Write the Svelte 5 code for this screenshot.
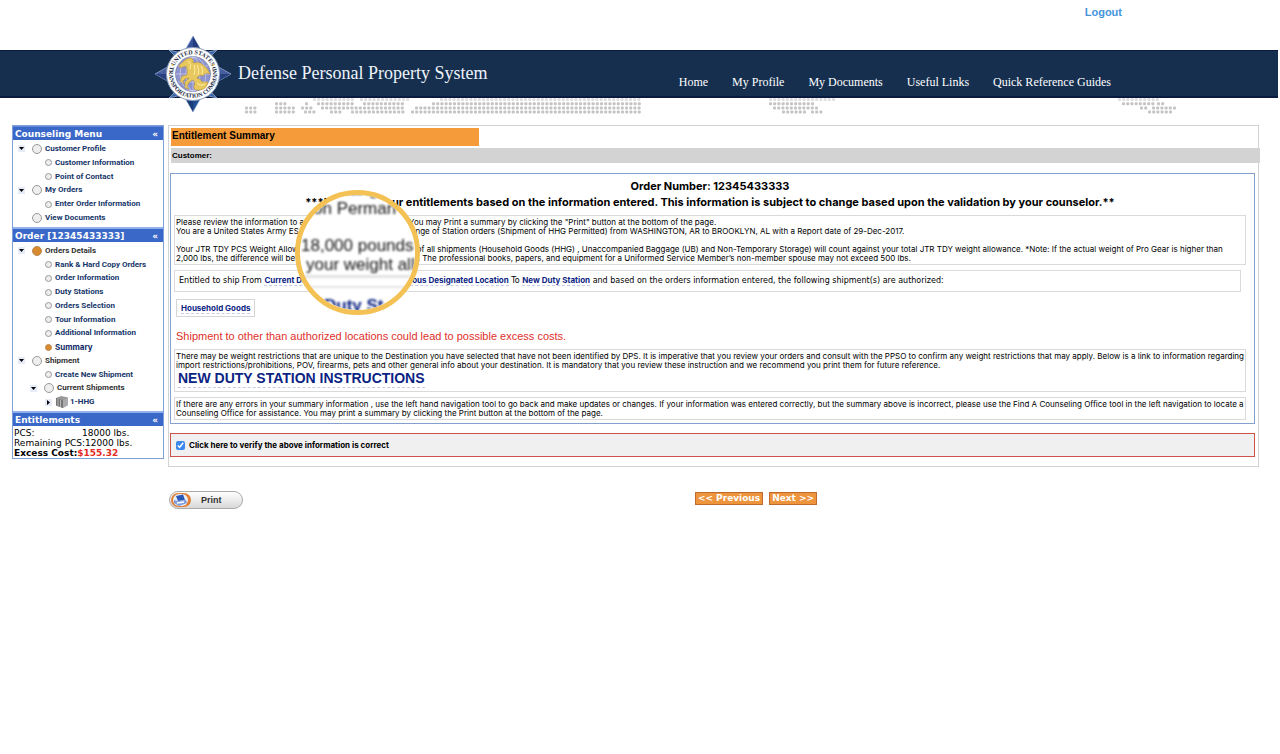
<script>
  const counseling = [
    { label: 'Customer Profile', level: 1, arrow: 'down', icon: 'big' },
    { label: 'Customer Information', level: 2, icon: 'small' },
    { label: 'Point of Contact', level: 2, icon: 'small' },
    { label: 'My Orders', level: 1, arrow: 'down', icon: 'big' },
    { label: 'Enter Order Information', level: 2, icon: 'small' },
    { label: 'View Documents', level: 1, icon: 'big' }
  ];
  const order = [
    { label: 'Orders Details', level: 1, arrow: 'down', icon: 'big', active: true, dark: true },
    { label: 'Rank & Hard Copy Orders', level: 2, icon: 'small' },
    { label: 'Order Information', level: 2, icon: 'small' },
    { label: 'Duty Stations', level: 2, icon: 'small' },
    { label: 'Orders Selection', level: 2, icon: 'small' },
    { label: 'Tour Information', level: 2, icon: 'small' },
    { label: 'Additional Information', level: 2, icon: 'small' },
    { label: 'Summary', level: 2, icon: 'small', active: true, current: true },
    { label: 'Shipment', level: 1, arrow: 'down', icon: 'big', dark: true },
    { label: 'Create New Shipment', level: 2, icon: 'small' },
    { label: 'Current Shipments', level: 2, arrow: 'down', icon: 'big', dark: true },
    { label: '1-HHG', level: 3, arrow: 'right', icon: 'box' }
  ];
  const menus = [
    { title: 'Counseling Menu', items: counseling, size: 'short' },
    { title: 'Order [12345433333]', items: order, size: 'long' }
  ];
  const nav = ['Home', 'My Profile', 'My Documents', 'Useful Links', 'Quick Reference Guides'];

  // Dotted world map below the banner: [row, first x, last x]
  const runs = [
    [0, 314, 353], [0, 361, 408], [0, 441, 640], [0, 770, 835], [0, 1119, 1155],
    [1, 276, 286], [1, 306, 306], [1, 318, 353], [1, 364, 401], [1, 433, 640], [1, 770, 814], [1, 1123, 1151], [1, 1158, 1163],
    [2, 246, 256], [2, 276, 294], [2, 302, 310], [2, 322, 401], [2, 416, 640], [2, 774, 814], [2, 1141, 1146], [2, 1153, 1176],
    [3, 246, 256], [3, 276, 294], [3, 305, 315], [3, 331, 340], [3, 352, 401], [3, 412, 640], [3, 783, 805], [3, 812, 822], [3, 1149, 1172]
  ];
  const dots = runs.flatMap(([row, a, b]) => {
    const n = Math.round((b - a) / 4.2);
    return Array.from({ length: n + 1 }, (_, i) => ({ x: a + i * 4.2, y: 1 + row * 4.2, row }));
  });
  let verified = $state(true);
</script>

<div class="page">
  <div class="top"><a href="#logout">Logout</a></div>
  <header>
    <svg class="seal" viewBox="-38 -38 76 76" aria-hidden="true">
      <g stroke="#9eb4dc" stroke-width=".7">
        <path d="M0 0L-24-24L-7-20ZM0 0L24-24L7-20ZM0 0L-24 24L-7 20ZM0 0L24 24L7 20Z" fill="#3c67a8" />
        <path d="M0-38L9-22L0 0L-9-22Z" fill="#34519b" />
        <path d="M0 38L9 22L0 0L-9 22Z" fill="#1f4d92" />
        <path d="M-38 0L-22-9L0 0L-22 9ZM38 0L22-9L0 0L22 9Z" fill="#455c9e" />
      </g>
      <path d="M0-38L9-22L0 0ZM0 38L-9 22L0 0ZM38 0L22 9L0 0ZM-38 0L-22 9L0 0Z" fill="#172f6c" opacity=".65" />
      <circle r="26.5" fill="#fff" stroke="#91a0bd" />
      <circle r="17.5" fill="#8d93cf" stroke="#69729f" stroke-width=".6" />
      <g fill="none" stroke="#d8dcf4" stroke-width=".6">
        <ellipse rx="7" ry="17" /><ellipse rx="13" ry="17" />
        <path d="M0-17V17M-17 0H17M-15-8H15M-15 8H15" />
      </g>
      <path d="M-10-12Q-7-16-2-16Q1-15 0-11Q6-13 9-10Q15-6 17 0Q12-2 10 2Q6 0 4 4Q8 5 9 8H15Q14 15 7 16Q0 17 1 12Q3 8 0 6Q-4 7-6 12L-4 15L-8 14L-8 8L-4 4Q-8 4-10 7L-9 10L-13 7L-11 2L-6 1Q-5-4-7-8L-13-6L-14-9Z" fill="#e7c75e" stroke="#b08c2e" stroke-width=".5" />
      <path d="M-5-13Q-1-10-3-5M1-9Q3-5 1 1M4-9Q7-5 5 1M8-8Q11-4 9 0M4 9Q8 13 12 10" fill="none" stroke="#fff0a5" stroke-width="1" />
      <path id="arc-top" d="M-19.5-5A20.2 20.2 0 0 1 19.5-5" fill="none" />
      <path id="ring-low" d="M-22.7-8A24 24 0 1 0 22.7-8" fill="none" />
      <text class="seal-text"><textPath href="#arc-top" startOffset="50%" text-anchor="middle">UNITED STATES</textPath></text>
      <text class="seal-text"><textPath href="#ring-low" startOffset="50%" text-anchor="middle">TRANSPORTATION COMMAND</textPath></text>
      <g fill="#e0c65c"><circle cx="-20.5" cy="-9" r="1" /><circle cx="20.5" cy="-9" r="1" /></g>
    </svg>
    <span class="brand">Defense Personal Property System</span>
    <nav>
      {#each nav as n}<a href="#top">{n}</a>{/each}
    </nav>
  </header>
  <svg class="map" viewBox="0 0 1280 16" aria-hidden="true">
    {#each dots as d}<rect x={d.x - 1} y={d.y - 1} width="3" height="3" rx="1" fill={d.row ? '#c4c4c4' : '#dedede'} />{/each}
  </svg>

  <div class="columns">
    <aside>
      {#each menus as m}
        <section>
          <h2>{m.title}<button aria-label="Collapse {m.title}">«</button></h2>
          <ul class={m.size}>
            {#each m.items as it}
              <li class="l{it.level}">
                <span class="slot">
                  {#if it.arrow}
                    <svg viewBox="0 0 7 7" width="7" height="7"><rect width="7" height="7" fill="#e6ecf7" /><path d={it.arrow === 'down' ? 'M1 2H6L3.5 5Z' : 'M2 1V6L5 3.5Z'} fill="#000" /></svg>
                  {/if}
                </span>
                {#if it.icon === 'box'}
                  <svg viewBox="0 0 12 12" width="12" height="12"><path d="M0 2L5 0L12 1.5V9L7 12L0 9.5Z" fill="#999" /><path d="M0 2L7 4V12L0 9.5Z" fill="#777" /><path d="M7 4L12 1.5V9L7 12Z" fill="#aaa" /><path d="M2 2.500V10M4.500 3.500V11" stroke="#b5b5b5" /></svg>
                {:else}
                  <i class={it.icon} class:active={it.active}></i>
                {/if}
                <a href="#top" class:dark={it.dark} class:current={it.current}>{it.label}</a>
              </li>
            {/each}
          </ul>
        </section>
      {/each}
      <section>
        <h2>Entitlements<button aria-label="Collapse Entitlements">«</button></h2>
        <dl>
          <div><dt>PCS:</dt><dd>18000 lbs.</dd></div>
          <div><dt>Remaining PCS:</dt><dd>12000 lbs.</dd></div>
          <div class="cost"><dt>Excess Cost:</dt><dd>$155.32</dd></div>
        </dl>
      </section>
    </aside>

    <main>
      <div class="frame">
        <h1>Entitlement Summary</h1>
        <div class="customer">Customer:</div>
        <div class="summary">
          <p class="lead">Order Number: 12345433333</p>
          <p class="lead">***Below are your entitlements based on the information entered. This information is subject to change based upon the validation by your counselor.**</p>
          <div class="note">
            Please review the information to assure that it is fully correct. You may Print a summary by clicking the "Print" button at the bottom of the page.<br />
            You are a United States Army ES, grade E-5, on Permanent Change of Station orders (Shipment of HHG Permitted) from WASHINGTON, AR to BROOKLYN, AL with a Report date of 29-Dec-2017.<br /><br />
            Your JTR TDY PCS Weight Allowance is 18,000 pounds. Weight of all shipments (Household Goods (HHG) , Unaccompanied Baggage (UB) and Non-Temporary Storage) will count against your total JTR TDY weight allowance. *Note: If the actual weight of Pro Gear is higher than<br />2,000 lbs, the difference will be added to your weight allowance. The professional books, papers, and equipment for a Uniformed Service Member’s non-member spouse may not exceed 500 lbs.
          </div>
          <div class="note ship">Entitled to ship From <a href="#top">Current Duty Station Location or Previous Designated Location</a> To <a href="#top">New Duty Station</a> and based on the orders information entered, the following shipment(s) are authorized:</div>
          <div class="goods"><a href="#top">Household Goods</a></div>
          <p class="warn">Shipment to other than authorized locations could lead to possible excess costs.</p>
          <div class="note">
            There may be weight restrictions that are unique to the Destination you have selected that have not been identified by DPS. It is imperative that you review your orders and consult with the PPSO to confirm any weight restrictions that may apply. Below is a link to information regarding<br />import restrictions/prohibitions, POV, firearms, pets and other general info about your destination. It is mandatory that you review these instruction and we recommend you print them for future reference.
            <a class="instructions" href="#top">NEW DUTY STATION INSTRUCTIONS</a>
          </div>
          <div class="note">
            If there are any errors in your summary information , use the left hand navigation tool to go back and make updates or changes. If your information was entered correctly, but the summary above is incorrect, please use the Find A Counseling Office tool in the left navigation to locate a<br />Counseling Office for assistance. You may print a summary by clicking the Print button at the bottom of the page.
          </div>
          <div class="lens" aria-hidden="true">
            <span class="a">Change</span>
            <span class="b">on Perman</span>
            <span class="c">18,000 pounds</span>
            <span class="d">your weight all</span>
            <span class="rule"></span>
            <span class="e">Duty St</span>
          </div>
        </div>
        <label class="verify"><input type="checkbox" bind:checked={verified} />Click here to verify the above information is correct</label>
      </div>
      <div class="actions">
        <button class="print">
          <svg viewBox="0 0 22 16" width="22" height="16" aria-hidden="true"><rect x="1" y="1" width="20" height="14" rx="7" fill="#e07f35" /><rect x="3" y="2" width="15" height="12" rx="6" fill="#e8edf8" /><path d="M6 4L13 2.500L15 8L8 9Z" fill="#2957b8" /><path d="M4 8L8 9L16 8L17 11L9 14L4 11Z" fill="#7fa0dd" /><path d="M7 11L14 10" stroke="#fff" stroke-width="1.500" /></svg>
          Print
        </button>
        <div class="steps"><button>&lt;&lt; Previous</button><button>Next &gt;&gt;</button></div>
      </div>
    </main>
  </div>
</div>

<style>
  :global(body) { margin: 0; background: #fff; }
  .page { font-family: "Liberation Sans", Arial, sans-serif; color: #000; }
  a { text-decoration: none; color: #0b2383; }
  p, h1, h2, ul, dl, dd { margin: 0; padding: 0; }
  button { font: inherit; cursor: pointer; }
  .top { height: 50px; box-sizing: border-box; padding: 4px 158px 0 0; text-align: right; font-size: 11px; line-height: 16px; }
  .top a { color: #4494dc; font-weight: bold; }
  header { position: relative; display: flex; justify-content: space-between; height: 48px; box-sizing: border-box; margin-right: 2px; padding: 0 167px 0 238px; background: #162f4f; border-top: 1px solid #0c1a3f; border-bottom: 2px solid #0a1b42; font-family: "Liberation Serif", "Times New Roman", serif; color: #fff; }
  .seal { position: absolute; left: 155px; top: -15px; width: 76px; height: 76px; }
  .seal-text { font: bold 6px "Liberation Serif", serif; fill: #222b44; }
  .brand { font-size: 18px; line-height: 44px; color: #eef3fa; }
  nav { display: flex; gap: 24px; padding-top: 20px; }
  nav a { color: #fff; font-size: 12px; line-height: 22px; }
  .map { display: block; width: 100%; }

  .columns { display: flex; gap: 4px; padding: 11px 21px 0 12px; align-items: flex-start; }
  aside { width: 152px; box-sizing: border-box; flex: none; border: 1px solid #7f9fd8; }
  h2 { display: flex; justify-content: space-between; box-sizing: border-box; height: 14px; padding: 0 5px 0 2px; background: #3a68c8; border-top: 1px solid #5f88da; color: #fff; font: bold 9px/14px "DejaVu Sans", Verdana, sans-serif; }
  h2 button { border: 0; padding: 0; background: none; color: #fff; }
  ul { list-style: none; display: flex; flex-direction: column; box-sizing: border-box; padding: 2px 0; }
  section + section h2 { border-top: 2px solid #8fb0e8; height: 15px; }
  .short { min-height: 87px; }
  .long { min-height: 169px; }
  li { flex: 1; display: flex; align-items: center; gap: 3px; font-family: Roboto, Arial, sans-serif; font-size: 8px; line-height: 12px; font-weight: bold; white-space: nowrap; }
  li a { color: #16366a; }
  li a.dark { color: #333; }
  li a.current { color: #0f2a66; font-family: Inter, Arial, sans-serif; }
  .slot { width: 11px; height: 7px; display: flex; }
  .l1 { padding-left: 5px; }
  .l2 { padding-left: 17px; }
  .l3 { padding-left: 32px; gap: 2px; }
  .l3 .slot { width: 9px; }
  i { box-sizing: border-box; flex: none; border: 1px solid #999; border-radius: 50%; background: #eee; }
  i.big { width: 10px; height: 10px; }
  i.small { width: 7px; height: 7px; margin-left: 1px; }
  i.active { background: #d98a2e; border-color: #b98a55; }
  dl { padding: 2px 1px 0; font: 9px/10px "DejaVu Sans", Verdana, sans-serif; }
  dl div { display: flex; }
  dt { min-width: 68px; white-space: nowrap; }
  .cost { font-weight: bold; }
  .cost dt { min-width: 0; }
  .cost dd { color: #e32c22; }

  main { flex: 1; min-width: 0; }
  .frame { border: 1px solid #d3d3d3; padding: 2px 3px 9px 2px; }
  h1 { width: 308px; box-sizing: border-box; height: 18px; padding-left: 1px; background: #f59b39; font-size: 10px; line-height: 16px; }
  .customer { margin: 2px -5px 0 0; padding-left: 1px; background: #d3d3d3; font-size: 8px; line-height: 15px; font-weight: bold; }
  .summary { position: relative; margin: 10px 0 0 -1px; border: 1px solid #84a0cc; padding: 4px 8px 3px 3px; font-family: Inter, Arial, sans-serif; }
  .lead { text-align: center; font-size: 11px; line-height: 16px; font-weight: bold; white-space: nowrap; }
  .note { border: 1px solid #dadada; padding: 2px 1px 1px; font-size: 8px; line-height: 9px; margin-top: 5px; }
  .note.ship { margin-right: 5px; padding: 0 4px; line-height: 20px; font-family: "DejaVu Sans", Verdana, sans-serif; }
  .ship a, .goods a { font: bold 8px Inter, Arial, sans-serif; border-bottom: 1px dashed #c6cbe8; }
  .goods { width: fit-content; margin: 7px 0 0 2px; border: 1px solid #d6d6d6; padding: 0 4px; font-size: 8px; line-height: 16px; }
  .warn { margin: 12px 0 5px 2px; color: #e0302a; font: 11px/15px "Liberation Sans", Arial, sans-serif; }
  .instructions { display: block; width: fit-content; margin: 0 0 2px 2px; font: bold 14px/17px "Liberation Sans", Arial, sans-serif; border-bottom: 1px dashed #c6cbe8; }
  .verify { display: flex; align-items: center; gap: 4px; box-sizing: border-box; height: 24px; margin: 9px 0 0 -1px; padding-left: 5px; border: 1px solid #d0504c; background: #f0f0f0; font: bold 8px Inter, Arial, sans-serif; }
  .verify input { width: 9px; height: 9px; margin: 0; accent-color: #3b87ec; }
  .actions { display: grid; grid-template-columns: 1fr auto 1fr; align-items: start; padding: 24px 0 0 1px; }
  .print { display: flex; align-items: center; gap: 9px; width: 74px; height: 18px; padding: 0; border: 1px solid #aaa; border-radius: 9px; background: linear-gradient(#fff, #d8d8d8); font-size: 9px; font-weight: bold; color: #333; }
  .steps { display: flex; gap: 6px; padding-top: 1px; margin-left: 84px; }
  .steps button { border: 1px solid #bd6a2c; padding: 0 2px; background: #ee943c; color: #fff; font: bold 9px/11px "DejaVu Sans", Verdana, sans-serif; }

  .lens { position: absolute; left: 124px; top: 16px; width: 125px; height: 125px; box-sizing: border-box; border: 5px solid #f3c154; border-radius: 50%; background: #fff; overflow: hidden; color: #111; font: 17px/20px "Liberation Sans", Arial, sans-serif; }
  .lens span { position: absolute; white-space: nowrap; filter: blur(1px); }
  .lens .a { left: 28px; top: -15px; }
  .lens .b { left: 13px; top: 4px; }
  .lens .c { left: 1px; top: 41px; }
  .lens .d { left: 6px; top: 60px; }
  .lens .rule { left: 0; right: 0; top: 80px; height: 8px; border: solid #e3e3e3; border-width: 3px 0 2px; }
  .lens .e { left: 24px; top: 101px; color: #0b2383; font-weight: bold; }
</style>
